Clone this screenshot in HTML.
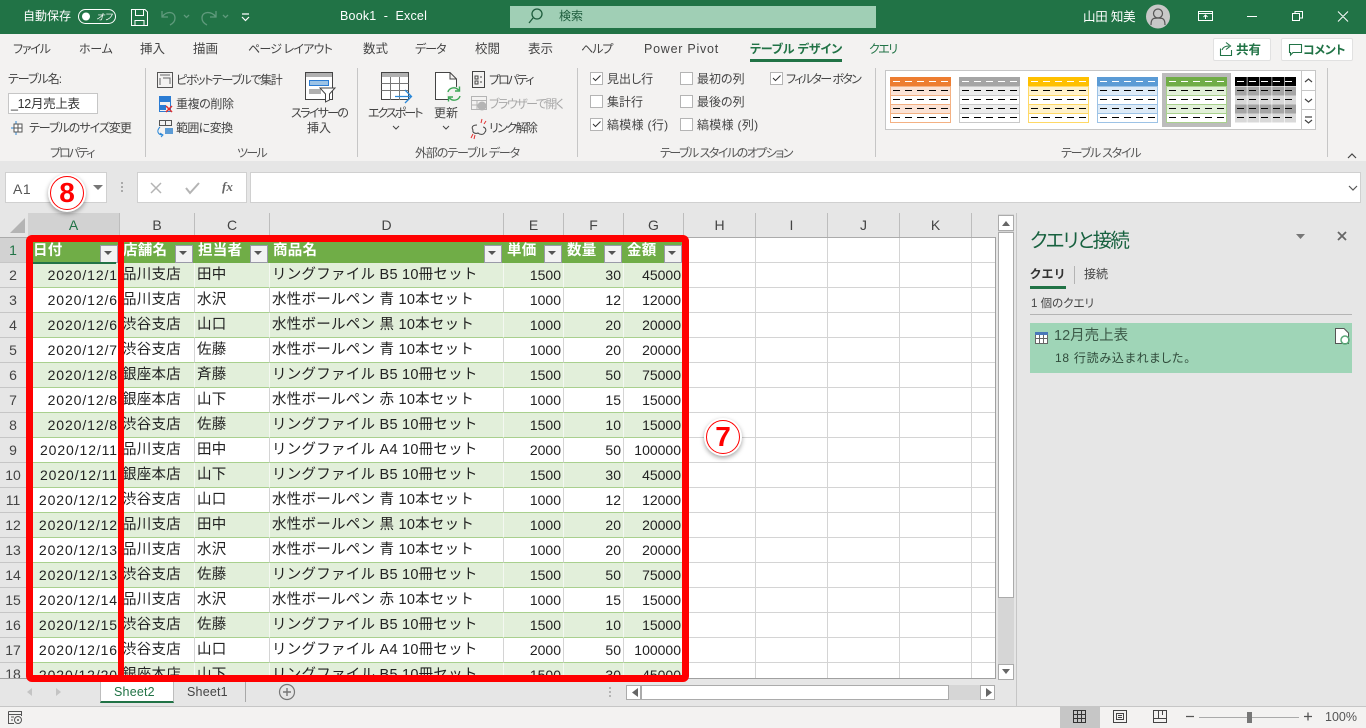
<!DOCTYPE html>
<html lang="ja"><head><meta charset="utf-8"><title>Book1 - Excel</title>
<style>
html,body{margin:0;padding:0}
body{width:1366px;height:728px;overflow:hidden;position:relative;background:#e6e6e6;font-family:"Liberation Sans","Noto Sans CJK JP",sans-serif;font-feature-settings:"palt";color:#444}
div,span{box-sizing:border-box}
.a{position:absolute}
.t{position:absolute;white-space:nowrap;font-size:12px;line-height:16px;height:16px;color:#444}
.cb{position:absolute;width:13px;height:13px;background:#fff;border:1px solid #b4b4b4}
.ch{position:absolute;top:213px;height:24px;text-align:center;line-height:24px;font-size:14px;color:#444;border-right:1px solid #bdbdbd;background:#e6e6e6}
.rh{position:absolute;left:0;width:28px;height:25px;text-align:center;line-height:24px;font-size:14px;color:#444;border-bottom:1px solid #c6c6c6;background:#e6e6e6;padding-right:1px;border-right:1px solid #bdbdbd}
#gr{position:absolute;left:28px;top:238px;width:967px;height:440px;overflow:hidden;background-color:#fff;background-image:repeating-linear-gradient(to bottom,transparent 0,transparent 24px,#d4d4d4 24px,#d4d4d4 25px)}
#gr i.v{position:absolute;top:0;bottom:0;width:1px;background:#d4d4d4}
table{position:absolute;left:0;top:0;border-collapse:separate;border-spacing:0;table-layout:fixed;width:656px}
td{height:25px;padding:0 2px;box-sizing:border-box;white-space:nowrap;overflow:hidden;font-size:14.5px;line-height:23px;color:#222;border-bottom:1px solid #a9d08e;border-right:1px solid #d4d4d4;font-feature-settings:normal;letter-spacing:.25px;position:relative}
tr:nth-child(even) td{background:#e2efda;border-right:1px solid #f4f8f1}
td.n{text-align:right;font-size:14px;letter-spacing:0;padding-right:2px}
td.d{text-align:right;font-size:14px;letter-spacing:.9px;padding-right:1px}
tr.h td{background:#70ad47;color:#fff;font-weight:bold;font-size:14.5px;line-height:24px;border:0;padding-left:3px}
tr.h td i{position:absolute;right:2px;top:7px;width:16px;height:16px;background:#f2f2f2;border:1px solid #9a9aa8}
tr.h td i:after{content:"";position:absolute;left:3px;top:5px;border:4px solid transparent;border-top:4px solid #555;border-bottom:0}
#fr{position:absolute;left:26px;top:235px;width:663px;height:447px;border:7px solid #f00;border-radius:6px;z-index:5}
#fd{position:absolute;left:118px;top:238px;width:6px;height:440px;background:#f00;z-index:5}
.bub{position:absolute;width:38px;height:38px;border-radius:50%;background:#fff;z-index:6;box-shadow:0 2px 5px rgba(0,0,0,.35)}
.bub:before{content:"";position:absolute;left:2px;top:2px;width:34px;height:34px;border:1.5px solid #f00;border-radius:50%;box-sizing:border-box}
.bub b{position:absolute;left:0;top:0;width:38px;text-align:center;line-height:37px;color:#f00;font-size:28px;font-family:"Liberation Sans",sans-serif}
svg{position:absolute;left:0;top:0;z-index:4;pointer-events:none}
</style></head><body>

<div class="a" style="left:0;top:0;width:1366px;height:34px;background:#217346"></div>
<div class="a" style="left:0;top:34px;width:1366px;height:127px;background:#f3f2f1"></div>
<div class="a" style="left:510px;top:6px;width:366px;height:22px;background:#a0cfb5"></div>

<span class="t" style="left:23px;top:8px;color:#fff">自動保存</span>
<span class="t" style="left:96px;top:9px;color:#fff;font-size:9px;font-style:italic">オフ</span>
<span class="t" style="left:340px;top:8px;color:#fff;font-size:12.5px;letter-spacing:.2px">Book1&nbsp; -&nbsp; Excel</span>
<span class="t" style="left:559px;top:8px;color:#1d5c3c">検索</span>
<span class="t" style="left:1083px;top:9px;color:#fff;font-size:12.5px;letter-spacing:-.2px">山田 知美</span>

<span class="t" style="left:13px;top:41px;letter-spacing:-1.2px">ファイル</span>
<span class="t" style="left:79px;top:41px;letter-spacing:-.3px">ホーム</span>
<span class="t" style="left:140px;top:41px;font-size:12.5px">挿入</span>
<span class="t" style="left:193px;top:41px;font-size:12.5px">描画</span>
<span class="t" style="left:248px;top:41px;letter-spacing:-.8px">ページ レイアウト</span>
<span class="t" style="left:363px;top:41px;font-size:12.5px">数式</span>
<span class="t" style="left:415px;top:41px;letter-spacing:-1px">データ</span>
<span class="t" style="left:475px;top:41px;font-size:12.5px">校閲</span>
<span class="t" style="left:528px;top:41px;font-size:12.5px">表示</span>
<span class="t" style="left:581px;top:41px;letter-spacing:-1px">ヘルプ</span>
<span class="t" style="left:644px;top:41px;font-size:12.5px;letter-spacing:.75px">Power Pivot</span>
<span class="t" style="left:750px;top:41px;color:#217346;font-weight:bold;letter-spacing:-.1px">テーブル デザイン</span>
<span class="t" style="left:869px;top:41px;color:#217346;letter-spacing:-1.5px">クエリ</span>
<div class="a" style="left:750px;top:59px;width:92px;height:3px;background:#217346"></div>

<div class="a" style="left:1213px;top:38px;width:58px;height:23px;background:#fff;border:1px solid #e1e1e1;border-radius:2px"></div>
<div class="a" style="left:1281px;top:38px;width:72px;height:23px;background:#fff;border:1px solid #e1e1e1;border-radius:2px"></div>
<span class="t" style="left:1236px;top:42px;color:#217346;font-weight:bold;font-size:12.5px">共有</span>
<span class="t" style="left:1303px;top:42px;color:#217346;font-weight:bold;letter-spacing:-.3px">コメント</span>

<span class="t" style="left:8px;top:71px;letter-spacing:-1px">テーブル名:</span>
<div class="a" style="left:8px;top:93px;width:90px;height:21px;background:#fff;border:1px solid #c6c6c6"></div>
<span class="t" style="left:11px;top:96px;color:#333;font-size:12.5px;letter-spacing:-.3px">_12月売上表</span>
<span class="t" style="left:29px;top:120px;letter-spacing:-1px">テーブルのサイズ変更</span>
<span class="t" style="left:50px;top:145px;color:#555;letter-spacing:-2px">プロパティ</span>
<span class="t" style="left:176px;top:72px;letter-spacing:-1.35px">ピボットテーブルで集計</span>
<span class="t" style="left:176px;top:96px;letter-spacing:-.4px">重複の削除</span>
<span class="t" style="left:176px;top:120px;letter-spacing:-.6px">範囲に変換</span>
<span class="t" style="left:291px;top:105px;letter-spacing:-1.7px">スライサーの</span>
<span class="t" style="left:307px;top:120px">挿入</span>
<span class="t" style="left:237px;top:145px;color:#555;letter-spacing:-1.7px">ツール</span>
<span class="t" style="left:368px;top:105px;letter-spacing:-2px">エクスポート</span>
<span class="t" style="left:434px;top:105px">更新</span>
<span class="t" style="left:489px;top:72px;letter-spacing:-2px">プロパティ</span>
<span class="t" style="left:489px;top:96px;color:#a8a8a8;letter-spacing:-1.5px">ブラウザーで開く</span>
<span class="t" style="left:489px;top:120px;letter-spacing:-1.6px">リンク解除</span>
<span class="t" style="left:415px;top:145px;color:#555;letter-spacing:-1.1px">外部のテーブル データ</span>

<div class="cb" style="left:590px;top:72px"></div><span class="t" style="left:607px;top:71px">見出し行</span>
<div class="cb" style="left:590px;top:95px"></div><span class="t" style="left:607px;top:94px">集計行</span>
<div class="cb" style="left:590px;top:118px"></div><span class="t" style="left:607px;top:117px;letter-spacing:.3px">縞模様 (行)</span>
<div class="cb" style="left:680px;top:72px"></div><span class="t" style="left:697px;top:71px">最初の列</span>
<div class="cb" style="left:680px;top:95px"></div><span class="t" style="left:697px;top:94px">最後の列</span>
<div class="cb" style="left:680px;top:118px"></div><span class="t" style="left:697px;top:117px;letter-spacing:.3px">縞模様 (列)</span>
<div class="cb" style="left:770px;top:72px"></div><span class="t" style="left:786px;top:71px;letter-spacing:-1.6px">フィルター ボタン</span>
<span class="t" style="left:660px;top:145px;color:#555;letter-spacing:-1.5px">テーブル スタイルのオプション</span>
<span class="t" style="left:1061px;top:145px;color:#555;letter-spacing:-1.2px">テーブル スタイル</span>

<!-- formula bar -->
<div class="a" style="left:5px;top:172px;width:102px;height:31px;background:#fff;border:1px solid #d0d0d0"></div>
<span class="t" style="left:13px;top:181px;font-size:14px;color:#555;letter-spacing:.5px">A1</span>
<div class="a" style="left:137px;top:172px;width:110px;height:31px;background:#fff;border:1px solid #d0d0d0"></div>
<div class="a" style="left:250px;top:172px;width:1111px;height:31px;background:#fff;border:1px solid #d0d0d0"></div>
<span class="t" style="left:222px;top:179px;font-family:'Liberation Serif',serif;font-style:italic;font-weight:bold;font-size:13px;color:#666">fx</span>

<!-- headers -->
<div class="a" style="left:0;top:212px;width:996px;height:26px;background:#e6e6e6;border-bottom:1px solid #ababab"></div>
<div class="ch" style="left:28px;width:92px;background:#d2d2d2;color:#217346">A</div>
<div class="ch" style="left:120px;width:75px">B</div>
<div class="ch" style="left:195px;width:75px">C</div>
<div class="ch" style="left:270px;width:234px">D</div>
<div class="ch" style="left:504px;width:60px">E</div>
<div class="ch" style="left:564px;width:60px">F</div>
<div class="ch" style="left:624px;width:60px">G</div>
<div class="ch" style="left:684px;width:72px">H</div>
<div class="ch" style="left:756px;width:72px">I</div>
<div class="ch" style="left:828px;width:72px">J</div>
<div class="ch" style="left:900px;width:72px">K</div>

<div class="rh" style="top:238px;background:#d2d2d2;color:#217346">1</div>
<div class="rh" style="top:263px">2</div><div class="rh" style="top:288px">3</div><div class="rh" style="top:313px">4</div><div class="rh" style="top:338px">5</div><div class="rh" style="top:363px">6</div><div class="rh" style="top:388px">7</div><div class="rh" style="top:413px">8</div><div class="rh" style="top:438px">9</div><div class="rh" style="top:463px">10</div><div class="rh" style="top:488px">11</div><div class="rh" style="top:513px">12</div><div class="rh" style="top:538px">13</div><div class="rh" style="top:563px">14</div><div class="rh" style="top:588px">15</div><div class="rh" style="top:613px">16</div><div class="rh" style="top:638px">17</div><div class="rh" style="top:663px;height:15px;line-height:22px;overflow:hidden;border-bottom:0">18</div>

<div id="gr">
<i class="v" style="left:727px"></i><i class="v" style="left:799px"></i><i class="v" style="left:871px"></i><i class="v" style="left:943px"></i>
<table>
<colgroup><col style="width:92px"><col style="width:75px"><col style="width:75px"><col style="width:234px"><col style="width:60px"><col style="width:60px"><col style="width:60px"></colgroup>
<tr class="h"><td style="padding-left:5px">日付<i></i></td><td>店舗名<i></i></td><td>担当者<i></i></td><td>商品名<i></i></td><td>単価<i></i></td><td>数量<i></i></td><td>金額<i></i></td></tr>
<tr><td class="d">2020/12/1</td><td>品川支店</td><td>田中</td><td>リングファイル B5 10冊セット</td><td class="n">1500</td><td class="n">30</td><td class="n">45000</td></tr>
<tr><td class="d">2020/12/6</td><td>品川支店</td><td>水沢</td><td>水性ボールペン 青 10本セット</td><td class="n">1000</td><td class="n">12</td><td class="n">12000</td></tr>
<tr><td class="d">2020/12/6</td><td>渋谷支店</td><td>山口</td><td>水性ボールペン 黒 10本セット</td><td class="n">1000</td><td class="n">20</td><td class="n">20000</td></tr>
<tr><td class="d">2020/12/7</td><td>渋谷支店</td><td>佐藤</td><td>水性ボールペン 青 10本セット</td><td class="n">1000</td><td class="n">20</td><td class="n">20000</td></tr>
<tr><td class="d">2020/12/8</td><td>銀座本店</td><td>斉藤</td><td>リングファイル B5 10冊セット</td><td class="n">1500</td><td class="n">50</td><td class="n">75000</td></tr>
<tr><td class="d">2020/12/8</td><td>銀座本店</td><td>山下</td><td>水性ボールペン 赤 10本セット</td><td class="n">1000</td><td class="n">15</td><td class="n">15000</td></tr>
<tr><td class="d">2020/12/8</td><td>渋谷支店</td><td>佐藤</td><td>リングファイル B5 10冊セット</td><td class="n">1500</td><td class="n">10</td><td class="n">15000</td></tr>
<tr><td class="d">2020/12/11</td><td>品川支店</td><td>田中</td><td>リングファイル A4 10冊セット</td><td class="n">2000</td><td class="n">50</td><td class="n">100000</td></tr>
<tr><td class="d">2020/12/11</td><td>銀座本店</td><td>山下</td><td>リングファイル B5 10冊セット</td><td class="n">1500</td><td class="n">30</td><td class="n">45000</td></tr>
<tr><td class="d">2020/12/12</td><td>渋谷支店</td><td>山口</td><td>水性ボールペン 青 10本セット</td><td class="n">1000</td><td class="n">12</td><td class="n">12000</td></tr>
<tr><td class="d">2020/12/12</td><td>品川支店</td><td>田中</td><td>水性ボールペン 黒 10本セット</td><td class="n">1000</td><td class="n">20</td><td class="n">20000</td></tr>
<tr><td class="d">2020/12/13</td><td>品川支店</td><td>水沢</td><td>水性ボールペン 青 10本セット</td><td class="n">1000</td><td class="n">20</td><td class="n">20000</td></tr>
<tr><td class="d">2020/12/13</td><td>渋谷支店</td><td>佐藤</td><td>リングファイル B5 10冊セット</td><td class="n">1500</td><td class="n">50</td><td class="n">75000</td></tr>
<tr><td class="d">2020/12/14</td><td>品川支店</td><td>水沢</td><td>水性ボールペン 赤 10本セット</td><td class="n">1000</td><td class="n">15</td><td class="n">15000</td></tr>
<tr><td class="d">2020/12/15</td><td>渋谷支店</td><td>佐藤</td><td>リングファイル B5 10冊セット</td><td class="n">1500</td><td class="n">10</td><td class="n">15000</td></tr>
<tr><td class="d">2020/12/16</td><td>渋谷支店</td><td>山口</td><td>リングファイル A4 10冊セット</td><td class="n">2000</td><td class="n">50</td><td class="n">100000</td></tr>
<tr><td class="d">2020/12/20</td><td>銀座本店</td><td>山下</td><td>リングファイル B5 10冊セット</td><td class="n">1500</td><td class="n">30</td><td class="n">45000</td></tr>
</table>
<div class="a" style="left:4px;top:24px;width:84px;height:2px;background:#217346"></div>
</div>
<div class="a" style="left:995px;top:237px;width:1px;height:442px;background:#a0a0a0"></div>
<div class="a" style="left:0;top:678px;width:996px;height:1px;background:#a0a0a0"></div>
<div id="fr"></div><div id="fd"></div>
<div class="bub" style="left:48px;top:174px"><b>8</b></div>
<div class="bub" style="left:704px;top:418px"><b>7</b></div>

<!-- v scrollbar -->
<div class="a" style="left:998px;top:214px;width:16px;height:466px;background:#d6d6d6"></div>
<div class="a" style="left:998px;top:215px;width:16px;height:16px;background:#fff;border:1px solid #ababab"></div>
<div class="a" style="left:998px;top:232px;width:16px;height:366px;background:#fff;border:1px solid #ababab"></div>
<div class="a" style="left:998px;top:664px;width:16px;height:16px;background:#fff;border:1px solid #ababab"></div>

<!-- pane -->
<div class="a" style="left:1016px;top:213px;width:1px;height:493px;background:#c6c6c6"></div>
<span class="t" style="left:1030px;top:229px;font-size:19.5px;line-height:24px;height:24px;color:#17613f;letter-spacing:-1.7px">クエリと接続</span>
<span class="t" style="left:1030px;top:266px;font-weight:bold;color:#333;letter-spacing:1px">クエリ</span>
<div class="a" style="left:1030px;top:286px;width:36px;height:3px;background:#217346"></div>
<div class="a" style="left:1074px;top:266px;width:1px;height:18px;background:#b4b4b4"></div>
<span class="t" style="left:1084px;top:266px">接続</span>
<span class="t" style="left:1031px;top:296px;font-size:11.5px">1 個のクエリ</span>
<div class="a" style="left:1030px;top:314px;width:322px;height:1px;background:#b4b4b4"></div>
<div class="a" style="left:1030px;top:323px;width:322px;height:50px;background:#9fd5b7"></div>
<span class="t" style="left:1054px;top:327px;font-size:14.5px;line-height:18px;height:18px;color:#3c5a48">12月売上表</span>
<span class="t" style="left:1055px;top:350px;color:#2f4a3a;letter-spacing:.75px">18 行読み込まれました。</span>

<!-- sheet tabs -->
<div class="a" style="left:100px;top:681px;width:74px;height:22px;background:#fff;border-left:1px solid #bdbdbd;border-right:1px solid #bdbdbd;border-bottom:2px solid #217346"></div>
<span class="t" style="left:114px;top:684px;color:#217346;font-size:12.5px;letter-spacing:.2px">Sheet2</span>
<span class="t" style="left:187px;top:684px;font-size:12.5px;letter-spacing:.2px">Sheet1</span>
<div class="a" style="left:245px;top:681px;width:1px;height:21px;background:#a8a8a8"></div>
<!-- h scrollbar -->
<div class="a" style="left:626px;top:685px;width:369px;height:15px;background:#d6d6d6"></div>
<div class="a" style="left:626px;top:685px;width:15px;height:15px;background:#fff;border:1px solid #ababab"></div>
<div class="a" style="left:641px;top:685px;width:308px;height:15px;background:#fff;border:1px solid #ababab"></div>
<div class="a" style="left:980px;top:685px;width:15px;height:15px;background:#fff;border:1px solid #ababab"></div>
<!-- status -->
<div class="a" style="left:0;top:706px;width:1366px;height:22px;background:#f3f2f1;border-top:1px solid #c6c6c6"></div>
<div class="a" style="left:1060px;top:707px;width:40px;height:21px;background:#c6c6c6"></div>
<span class="t" style="left:1325px;top:709px;font-size:12.5px;color:#555">100%</span>

<svg width="1366" height="728" viewBox="0 0 1366 728" fill="none">
<defs>
<g id="dk" stroke="#000"><path stroke-dasharray="7 5" d="M3 13.5H58M3 22.5H58M3 31.5H58M3 40.5H58"/></g>
<g id="wh" stroke="#fff"><path stroke-dasharray="7 5" d="M3 4.5H58"/></g>
</defs>
<!-- title bar -->
<rect x="78.5" y="9.5" width="37" height="14" rx="7" stroke="#fff"/><circle cx="86" cy="16.5" r="4" fill="#fff"/>
<g stroke="#fff"><path d="M131.5 9.5H145L147.5 12V25.5H131.5ZM135.5 9.500V15.500H143.500V9.500M135 25.500V20.500H144V25.500"/></g>
<g stroke="#5f9a7c" stroke-width="1.3"><path d="M162 11V17H168M162.500 16.500C166 11 175 11 175 18C175 21 173 23.500 170 25"/><path d="M184 15l2.500 2.500 2.500-2.500"/><path d="M216 11V17H210M215.500 16.500C212 11 202 11 202 18C202 21 204 23.500 207 25"/><path d="M223 15l2.500 2.500 2.500-2.500"/></g>
<path d="M242 14H249M242 17l3.500 3.500 3.500-3.500" stroke="#fff" stroke-width="1.2"/>
<circle cx="537" cy="14" r="5" stroke="#1d5c3c" stroke-width="1.3"/><path d="M533 18l-4 5" stroke="#1d5c3c" stroke-width="1.3"/>
<circle cx="1158" cy="16.500" r="12" fill="#c8c8c8"/><circle cx="1158" cy="13.500" r="4.500" stroke="#555" stroke-width="1.2"/><path d="M1151 25c0-7 3-7 7-7s7 0 7 7" stroke="#555" stroke-width="1.2"/>
<g stroke="#fff"><path d="M1198.500 11.500H1212.500V20.500H1198.500ZM1198.500 13.500H1212.500M1205.500 19V15M1203.500 17L1205.500 15 1207.500 17"/><path d="M1247 16.500H1257M1292.500 13.500H1299.500V20.500H1292.500ZM1295 13V11.500H1302.500V18H1300M1338 11.500L1348 21.500M1348 11.500L1338 21.500"/></g>
<!-- share -->
<path d="M1220.500 48.500V55.500H1231.500V50M1222 50c1-3 4-4 7-4M1226 42.500L1230.500 46 1226 49.500" stroke="#217346" stroke-width="1.1"/>
<path d="M1289.500 44.500H1301.500V52.500H1293L1290.500 55V52.500H1289.500Z" stroke="#217346" stroke-width="1.1"/>
<!-- ribbon separators -->
<g stroke="#c6c6c6"><path d="M145.500 68V157M357.500 68V157M577.500 68V157M875.500 68V157M1327.500 68V157"/></g>
<!-- small group icons -->
<path d="M16 121V135M11 128H22" stroke="#2b88d8"/><rect x="14" y="124" width="8" height="8" stroke="#555" fill="#fff"/><path d="M14 128H22M18 124V132" stroke="#555"/>
<rect x="157.500" y="72.500" width="15" height="15" stroke="#555"/><path d="M160 75H170M160 78V85M163 78H170V84" stroke="#666"/>
<rect x="159.500" y="96.500" width="11" height="15" stroke="#2b7cd3"/><rect x="160" y="97" width="10" height="5" fill="#2b7cd3"/><rect x="160" y="105" width="6" height="5" fill="#2b7cd3"/><path d="M166 106L172 112M172 106L166 112" stroke="#e03030" stroke-width="1.500"/>
<rect x="159.500" y="120.500" width="6" height="5" stroke="#555"/><rect x="165.500" y="120.500" width="6" height="5" stroke="#555"/><rect x="165" y="128" width="8" height="6" fill="#5b9bd5"/><path d="M160 127C156 131 158 135 163 135M160 133L163 135 161 137" stroke="#2b88d8"/>
<!-- slicer -->
<rect x="305.500" y="72.500" width="27" height="27" stroke="#444" fill="#fff"/><rect x="306" y="73" width="26" height="4" fill="#b0b0b0"/><rect x="309.500" y="80.500" width="19" height="5" fill="#9cc3e6" stroke="#2b7cd3"/><rect x="309" y="89" width="12" height="5" fill="#b0b0b0"/><path d="M320 88H335L329.500 94V100L325.500 102V94Z" fill="#fff" stroke="#444"/>
<!-- export -->
<rect x="381.500" y="72.500" width="27" height="27" stroke="#444" fill="#fff"/><rect x="382" y="73" width="26" height="4" fill="#b0b0b0"/><path d="M381.500 83.500H408.500M381.500 90.500H408.500M390.500 77V100M399.500 77V100" stroke="#777"/><path d="M395 96.500H411M405 90L411.500 96.500 405 103" stroke="#2b88d8" stroke-width="1.300"/>
<path d="M393 126l3 3 3-3M443 126l3 3 3-3" stroke="#444"/>
<!-- refresh -->
<path d="M435.500 72.500H450L456.500 79V99.500H435.500ZM450 72.500V79H456.500" stroke="#444" fill="#fff"/>
<circle cx="454" cy="94" r="6.500" fill="#f3f2f1" stroke="#f3f2f1" stroke-width="2"/>
<path d="M448 92C449 88 455 86 458.500 90M460 96C459 100 453 102 449.500 98M459.500 86.500V91H455M448.500 101.500V97H453" stroke="#3aa655" stroke-width="1.400"/>
<!-- props -->
<path d="M472.500 71.500H484.500V87.500H472.500ZM475 76H478V79H475ZM480 77H482M475 81H478V84H475ZM480 82H482" stroke="#444"/>
<rect x="471.500" y="96.500" width="15" height="13" stroke="#b4b4b4"/><path d="M471.500 100.500H486.500M471.500 105H486.500M477 100V110" stroke="#b4b4b4"/><circle cx="482" cy="106" r="4.500" fill="#b4b4b4"/>
<path d="M477 125c-4 0-6 2-4 5-1 3 3 4 5 3 2 2 6 2 7-1 2-2 0-5-2-5" stroke="#444"/>
<path d="M473 134l-2 4M475 135l-1 4M481 123l1-4M484 124l2-3" stroke="#e03030"/>
<!-- checks -->
<path d="M593 78l2.500 2.500 5-5M593 124l2.500 2.500 5-5M773 78l2.500 2.500 5-5" stroke="#333"/>
<!-- gallery -->
<rect x="885.500" y="70.500" width="430" height="59" fill="#fff" stroke="#c6c6c6"/>
<rect x="1162" y="73" width="69" height="54" fill="#bcbcbc"/>
<g transform="translate(890 77)"><rect x=".5" y=".5" width="60" height="45" fill="#fff" stroke="#f4b183"/><rect y="9" x="1" width="59" height="9" fill="#fbe3d6"/><rect y="27" x="1" width="59" height="9" fill="#fbe3d6"/><path d="M0 9.500H61M0 18.500H61M0 27.500H61M0 36.500H61" stroke="#f4b183"/><rect width="61" height="9" fill="#ed7d31"/><use href="#dk"/><use href="#wh"/></g>
<g transform="translate(959 77)"><rect x=".5" y=".5" width="60" height="45" fill="#fff" stroke="#c9c9c9"/><rect y="9" x="1" width="59" height="9" fill="#ededed"/><rect y="27" x="1" width="59" height="9" fill="#ededed"/><path d="M0 9.500H61M0 18.500H61M0 27.500H61M0 36.500H61" stroke="#c9c9c9"/><rect width="61" height="9" fill="#a5a5a5"/><use href="#dk"/><use href="#wh"/></g>
<g transform="translate(1028 77)"><rect x=".5" y=".5" width="60" height="45" fill="#fff" stroke="#ffd966"/><rect y="9" x="1" width="59" height="9" fill="#fff2cc"/><rect y="27" x="1" width="59" height="9" fill="#fff2cc"/><path d="M0 9.500H61M0 18.500H61M0 27.500H61M0 36.500H61" stroke="#ffd966"/><rect width="61" height="9" fill="#ffc000"/><use href="#dk"/><use href="#wh"/></g>
<g transform="translate(1097 77)"><rect x=".5" y=".5" width="60" height="45" fill="#fff" stroke="#9dc3e6"/><rect y="9" x="1" width="59" height="9" fill="#deebf7"/><rect y="27" x="1" width="59" height="9" fill="#deebf7"/><path d="M0 9.500H61M0 18.500H61M0 27.500H61M0 36.500H61" stroke="#9dc3e6"/><rect width="61" height="9" fill="#5b9bd5"/><use href="#dk"/><use href="#wh"/></g>
<g transform="translate(1166 77)"><rect x=".5" y=".5" width="60" height="45" fill="#fff" stroke="#a9d18e"/><rect y="9" x="1" width="59" height="9" fill="#e2f0d9"/><rect y="27" x="1" width="59" height="9" fill="#e2f0d9"/><path d="M0 9.500H61M0 18.500H61M0 27.500H61M0 36.500H61" stroke="#a9d18e"/><rect width="61" height="9" fill="#70ad47"/><use href="#dk"/><use href="#wh"/></g>
<g transform="translate(1235 77)"><g stroke-width="9"><path stroke="#000" stroke-dasharray="11.800 .6" d="M0 4.500H61"/><path stroke="#a5a5a5" stroke-dasharray="11.800 .6" d="M0 14H61M0 32H61"/><path stroke="#d9d9d9" stroke-dasharray="11.800 .6" d="M0 23H61M0 41H61"/></g><g transform="translate(-1 0)"><use href="#dk"/><use href="#wh"/></g></g>
<g fill="#fff" stroke="#c6c6c6"><rect x="1301.500" y="70.500" width="14" height="20"/><rect x="1301.500" y="90.500" width="14" height="19"/><rect x="1301.500" y="109.500" width="14" height="20"/></g>
<path d="M1305 82l3.500-3 3.500 3M1305 99l3.500 3 3.500-3M1305 117H1312M1305 120l3.500 3 3.500-3" stroke="#444" stroke-width="1.200"/>
<path d="M1348 158l4-4 4 4" stroke="#444" stroke-width="1.200"/>
<!-- formula bar icons -->
<path d="M93 185H103L98 190Z" fill="#777"/>
<g fill="#aaa"><rect x="121" y="182" width="2" height="2"/><rect x="121" y="186" width="2" height="2"/><rect x="121" y="190" width="2" height="2"/></g>
<path d="M151 183L161 193M161 183L151 193" stroke="#b4b4b4" stroke-width="1.500"/>
<path d="M186 188L190 193 199 183" stroke="#b4b4b4" stroke-width="2"/>
<path d="M1349 186l4 4 4-4" stroke="#555" stroke-width="1.200"/>
<path d="M25 218V233H10Z" fill="#b4b4b4"/>
<!-- scroll icons -->
<path d="M1002 226L1006 221 1010 226Z" fill="#666"/><path d="M1002 669L1006 674 1010 669Z" fill="#666"/>
<path d="M638 688V697L632 692.500Z" fill="#666"/><path d="M986 688V697L992 692.500Z" fill="#666"/>
<!-- pane icons -->
<path d="M1296 234H1305L1300.500 239Z" fill="#777"/>
<path d="M1338 232L1346 240M1346 232L1338 240" stroke="#666" stroke-width="1.800"/>
<rect x="1035.500" y="332.500" width="12" height="11" fill="#fff" stroke="#666"/><rect x="1035" y="332" width="13" height="3" fill="#4a78b8"/><path d="M1035 338.500H1048M1039.500 335V344M1043.500 335V344" stroke="#666"/>
<path d="M1335.500 328.500H1344L1348.500 333V343.500H1335.500Z" fill="#fff" stroke="#555"/><circle cx="1345" cy="340" r="4" stroke="#5aa878" stroke-width="1.500"/>
<!-- sheet nav -->
<path d="M32 688V696L27 692Z" fill="#c4c4c4"/><path d="M56 688V696L61 692Z" fill="#c4c4c4"/>
<circle cx="287" cy="692" r="7.500" stroke="#777" stroke-width="1.200"/><path d="M283 692H291M287 688V696" stroke="#777" stroke-width="1.400"/>
<g fill="#b4b4b4"><rect x="609" y="687" width="2" height="2"/><rect x="609" y="691" width="2" height="2"/><rect x="609" y="695" width="2" height="2"/></g>
<!-- status -->
<path d="M8.500 711.500H21.500V716M8.500 711.500V723.500H14M8.500 714.500H21.500M11 717H14M11 720H13" stroke="#555"/><circle cx="18" cy="720" r="3.500" stroke="#555"/><circle cx="18" cy="720" r="1" fill="#555"/>
<path d="M1073.500 710.500H1085.500V722.500H1073.500ZM1077.500 710.500V722.500M1081.500 710.500V722.500M1073.500 714.500H1085.500M1073.500 718.500H1085.500" stroke="#333"/>
<path d="M1113.500 710.500H1126.500V722.500H1113.500ZM1116.500 713.500H1123.500V719.500H1116.500ZM1118 715.500H1122M1118 717.500H1122" stroke="#444"/>
<path d="M1153.500 710.500H1166.500V722.500H1153.500ZM1153.500 718.500H1166.500M1158.500 710.500V718.500M1162.500 710.500V715" stroke="#444"/>
<path d="M1186 716.500H1194M1304 716.500H1312M1308 712.500V720.500" stroke="#555" stroke-width="1.300"/>
<path d="M1199 717.500H1299" stroke="#aaa"/><rect x="1247" y="712" width="5" height="11" fill="#777"/>
</svg>
</body></html>
